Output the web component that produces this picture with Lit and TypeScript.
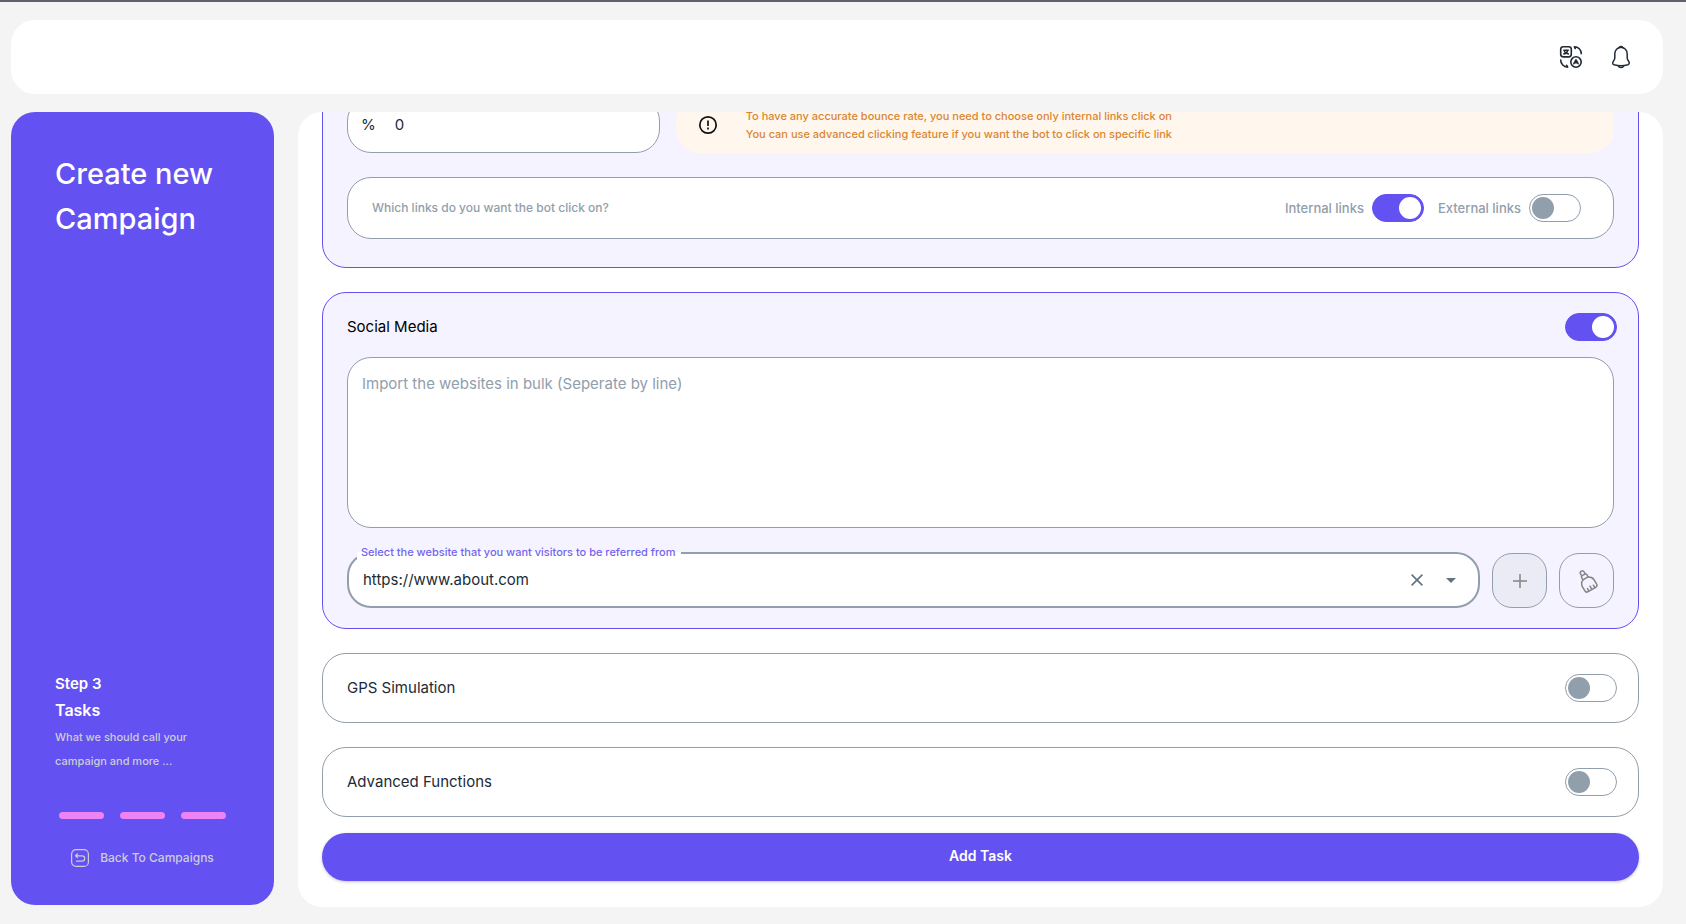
import { LitElement, html, css } from "lit";
import { customElement, property, state } from "lit/decorators.js";

@customElement("toggle-switch")
export class ToggleSwitch extends LitElement {
  @property({ type: Boolean }) checked = false;
  @property() label = "";
  @property({ type: Boolean, attribute: "show-label" }) showLabel = false;

  static styles = css`
    :host {
      display: block;
    }
    .wrap {
      display: flex;
      align-items: center;
      gap: 8px;
      cursor: pointer;
    }
    .caption {
      font-size: 13px;
      font-weight: 500;
      line-height: 20px;
      color: #919eab;
    }
    .box {
      appearance: none;
      box-sizing: border-box;
      display: flex;
      align-items: center;
      width: 52px;
      height: 28px;
      margin: 0;
      padding: 0 2px;
      border: 1px solid #919eab;
      border-radius: 14px;
      background: #fff;
      cursor: pointer;
    }
    .box::before {
      content: "";
      width: 22px;
      height: 22px;
      border-radius: 50%;
      background: #919eab;
    }
    .box:checked {
      justify-content: flex-end;
      border-color: #6351f2;
      background: #6351f2;
    }
    .box:checked::before {
      background: #fff;
    }
  `;

  render() {
    return html`<label class="wrap">
      ${this.showLabel ? html`<span class="caption">${this.label}</span>` : null}
      <input
        class="box"
        type="checkbox"
        role="switch"
        aria-label=${this.label}
        .checked=${this.checked}
        @change=${(e: Event) => (this.checked = (e.target as HTMLInputElement).checked)}
      />
    </label>`;
  }
}

@customElement("app-root")
export class AppRoot extends LitElement {
  @state() private website = "https://www.about.com";

  static styles = css`
    :host {
      display: grid;
      grid-template-rows: auto minmax(0, 1fr);
      gap: 18px;
      box-sizing: border-box;
      height: 100vh;
      padding: 18px 23px 17px 11px;
      border-top: 2px solid #625e6f;
      background: #f4f4f4;
      color: #212b36;
      font-family: Inter, "Open Sans", sans-serif;
      font-size: 15px;
      line-height: 24px;
    }
    * {
      box-sizing: border-box;
    }
    button,
    input,
    textarea {
      margin: 0;
      padding: 0;
      border: 0;
      background: none;
      color: inherit;
      font: inherit;
      outline: none;
    }
    button {
      cursor: pointer;
    }
    svg {
      display: block;
    }
    .header {
      display: flex;
      align-items: center;
      justify-content: flex-end;
      gap: 26px;
      height: 74px;
      padding: 0 30px;
      border-radius: 24px;
      background: #fff;
    }
    .body {
      display: grid;
      grid-template-columns: 263px minmax(0, 1fr);
      gap: 24px;
      min-height: 0;
    }
    .sidebar {
      display: flex;
      flex-direction: column;
      margin-bottom: 2px;
      padding: 39px 44px 35px;
      border-radius: 24px;
      background: #6351f2;
      color: #fff;
    }
    .title {
      margin: 0 0 auto;
      font-size: 29px;
      font-weight: 500;
      line-height: 45px;
    }
    .step,
    .task {
      margin: 0;
      font-size: 15px;
      font-weight: 600;
      line-height: 26px;
    }
    .task {
      font-size: 16px;
    }
    .hint {
      margin: 2px 0 0;
      font-size: 11px;
      font-weight: 500;
      line-height: 24px;
      color: #cdcdd6;
    }
    .progress {
      display: flex;
      gap: 16px;
      margin: 39px 4px 0;
    }
    .bar {
      width: 45px;
      height: 7px;
      border-radius: 4px;
      background: #ee82f7;
    }
    .back {
      display: flex;
      align-items: center;
      justify-content: center;
      gap: 11px;
      margin-top: 27px;
      color: #cdcdd6;
      font-size: 12px;
      font-weight: 500;
      line-height: 24px;
      text-decoration: none;
      white-space: nowrap;
    }
    /* A reversed column opens scrolled to its end. */
    .content {
      display: flex;
      flex-direction: column-reverse;
      overflow: auto;
      scrollbar-width: none;
      border-radius: 24px;
      background: #fff;
    }
    .form {
      flex: none;
      padding: 24px 24px 26px;
    }
    .stack {
      display: flex;
      flex-direction: column;
      gap: 24px;
    }
    .card {
      display: flex;
      flex-direction: column;
      gap: 24px;
      padding: 20px 24px;
      border: 1px solid #919eab;
      border-radius: 24px;
      background: #fff;
    }
    .active {
      border-color: #6351f2;
      background: #f5f3ff;
    }
    .bounce {
      padding: 24px 24px 28px;
    }
    .social .head {
      margin-bottom: -8px;
    }
    .head {
      display: flex;
      align-items: center;
      justify-content: space-between;
      margin-right: -3px;
    }
    .name {
      margin: 0;
      font-size: 15px;
      font-weight: 400;
      line-height: 24px;
    }
    .active .name {
      color: #000;
    }
    .row {
      display: grid;
      grid-template-columns: minmax(0, 1fr) minmax(0, 3fr);
      gap: 16px;
    }
    .percent {
      display: flex;
      align-items: center;
      gap: 19px;
      height: 56px;
      padding: 0 13px;
      border: 1px solid #919eab;
      border-radius: 24px;
      background: #fff;
    }
    .number {
      flex: 1;
      min-width: 0;
    }
    .notice {
      display: flex;
      align-items: center;
      gap: 28px;
      padding: 0 22px;
      border-radius: 24px;
      background: #fff7ed;
      color: #d98634;
      font-size: 11px;
      font-weight: 500;
      line-height: 18px;
    }
    .notice svg {
      flex: none;
    }
    .message {
      margin: 0;
    }
    .links {
      display: flex;
      align-items: center;
      gap: 14px;
      height: 62px;
      padding: 0 32px 0 24px;
      border: 1px solid #919eab;
      border-radius: 24px;
      background: #fff;
    }
    .question {
      flex: 1;
      margin: 0;
      font-size: 12px;
      font-weight: 500;
      line-height: 20px;
      color: #919eab;
    }
    .bulk {
      display: block;
      width: 100%;
      height: 171px;
      padding: 14px;
      border: 1px solid #919eab;
      border-radius: 24px;
      background: #fff;
      resize: none;
    }
    .bulk::placeholder {
      color: #919eab;
    }
    .picker {
      display: flex;
      align-items: flex-end;
      gap: 12px;
    }
    .select {
      position: relative;
      display: flex;
      flex: 1;
      align-items: center;
      gap: 10px;
      height: 56px;
      padding: 0 15px 0 14px;
      border: 2px solid #919eab;
      border-radius: 24px;
      background: #fff;
    }
    .float {
      position: absolute;
      top: -11px;
      left: 8px;
      padding: 0 6px 0 4px;
      background: linear-gradient(#f5f3ff 50%, #fff 50%);
      color: #7464f0;
      font-size: 11px;
      font-weight: 500;
      line-height: 18px;
    }
    .value {
      flex: 1;
      min-width: 0;
    }
    .mini {
      display: grid;
      place-items: center;
      width: 24px;
      height: 24px;
      color: #637381;
    }
    .square {
      display: grid;
      place-items: center;
      width: 55px;
      height: 55px;
      border: 1px solid #919eab;
      border-radius: 20px;
      color: #858585;
    }
    .shaded {
      background: #ebebf5;
    }
    .submit {
      display: block;
      width: 100%;
      height: 48px;
      margin-top: 16px;
      padding-bottom: 2px;
      border-radius: 24px;
      background: #6351f2;
      box-shadow: 0 1px 3px rgba(60, 60, 90, 0.3);
      color: #fff;
      font-size: 14px;
      font-weight: 600;
    }
  `;

  render() {
    return html`
      <header class="header">
        <button aria-label="Language">
          <svg width="24" height="24" viewBox="0 0 24 24" fill="none" stroke="#212b36" stroke-width="1.6" stroke-linecap="round" stroke-linejoin="round">
            <rect x="1.7" y="1.7" width="10.6" height="10.2" rx="2.6" />
            <path d="M4.900 5.300h4.400M4.900 8.900c2-.1 3.400-1.300 3.600-3.400M5.500 6.700c.8 1.300 2 2.100 3.800 2.200" />
            <circle cx="17" cy="17" r="5.2" />
            <path d="M14.900 18.700 17 14.900l2.100 3.800M15.800 17.700h2.400" />
            <path d="M1.7 15c0 4 3 7.100 7 7.100l-1-1.800M22.300 8.800c0-4-3-7.100-7-7.100l1 1.800" />
          </svg>
        </button>
        <button aria-label="Notifications">
          <svg width="24" height="24" viewBox="0 0 24 24" fill="none" stroke="#212b36" stroke-width="1.5" stroke-linecap="round">
            <path d="M12 2.300c-3.500 0-6.200 2.800-6.200 6.400v4.100c0 .6-.3 1.500-.6 2.100l-1.200 2c-.7 1.200-.2 2.500 1.100 2.900 4.500 1.200 9.300 1.200 13.800 0 1.200-.4 1.700-1.800 1.100-2.900l-1.200-2c-.3-.6-.6-1.500-.6-2.100V8.700c0-3.600-2.700-6.400-6.200-6.400Z" />
            <path d="M13.700 2.500a6.800 6.800 0 0 0-3.400 0c.3-.6.900-1 1.700-1s1.400.4 1.700 1ZM14.800 20.800c-.4 1-1.500 1.700-2.800 1.700s-2.400-.7-2.800-1.700" />
          </svg>
        </button>
      </header>
      <div class="body">
        <aside class="sidebar">
          <h1 class="title">Create new Campaign</h1>
          <p class="step">Step 3</p>
          <h2 class="task">Tasks</h2>
          <p class="hint">What we should call your campaign and more ...</p>
          <div class="progress">
            <span class="bar"></span><span class="bar"></span><span class="bar"></span>
          </div>
          <a class="back" href="#campaigns">
            <svg width="18" height="18" viewBox="0 0 18 18" fill="none" stroke="currentColor" stroke-width="1.2" stroke-linecap="round" stroke-linejoin="round">
              <rect x=".6" y=".6" width="16.800" height="16.800" rx="4.500" />
              <path d="M5.500 12.200h5.500a2.700 2.700 0 0 0 0-5.400H4.800M6.500 5 4.500 6.800l2 1.800" />
            </svg>
            Back To Campaigns
          </a>
        </aside>
        <main class="content">
          <div class="form">
            <div class="stack">
              <section class="card active bounce">
                <div class="row">
                  <label class="percent">
                    <span>%</span>
                    <input class="number" type="text" inputmode="numeric" value="0" />
                  </label>
                  <div class="notice">
                    <svg width="20" height="20" viewBox="0 0 20 20" fill="none" stroke="#111" stroke-width="1.700">
                      <circle cx="10" cy="10" r="8.200" />
                      <path d="M10 5.500v5.500M10 12.500v1.900" />
                    </svg>
                    <p class="message">
                      To have any accurate bounce rate, you need to choose only internal links click on<br />
                      You can use advanced clicking feature if you want the bot to click on specific link
                    </p>
                  </div>
                </div>
                <div class="links">
                  <p class="question">Which links do you want the bot click on?</p>
                  <toggle-switch show-label checked label="Internal links"></toggle-switch>
                  <toggle-switch show-label label="External links"></toggle-switch>
                </div>
              </section>

              <section class="card active social">
                <div class="head">
                  <h3 class="name">Social Media</h3>
                  <toggle-switch checked label="Social Media"></toggle-switch>
                </div>
                <textarea
                  class="bulk"
                  aria-label="Websites"
                  placeholder="Import the websites in bulk (Seperate by line)"
                ></textarea>
                <div class="picker">
                  <div class="select">
                    <label class="float" for="website">Select the website that you want visitors to be referred from</label>
                    <input
                      class="value"
                      id="website"
                      role="combobox"
                      aria-expanded="false"
                      .value=${this.website}
                      @input=${(e: Event) => (this.website = (e.target as HTMLInputElement).value)}
                    />
                    <button class="mini" aria-label="Clear" @click=${() => (this.website = "")}>
                      <svg width="12" height="12" viewBox="0 0 12 12" fill="none" stroke="currentColor" stroke-width="1.600">
                        <path d="m.6.6 10.800 10.800M11.400.6.6 11.400" />
                      </svg>
                    </button>
                    <button class="mini" aria-label="Open">
                      <svg width="10" height="5" viewBox="0 0 10 5" fill="currentColor"><path d="m0 0 5 5 5-5z" /></svg>
                    </button>
                  </div>
                  <button class="square shaded" aria-label="Add">
                    <svg width="14" height="14" viewBox="0 0 14 14" fill="none" stroke="currentColor" stroke-width="1.500">
                      <path d="M7 0v14M0 7h14" />
                    </svg>
                  </button>
                  <button class="square" aria-label="Clean">
                    <svg width="24" height="24" viewBox="0 0 24 24" fill="none" stroke="currentColor" stroke-width="1.500" stroke-linecap="round" stroke-linejoin="round">
                      <g transform="rotate(-30 12 12)">
                        <path d="M10 5V2.600a2 2 0 0 1 4 0V5M9 9V6.500A1.500 1.500 0 0 1 10.500 5h3A1.500 1.500 0 0 1 15 6.500V9" />
                        <path d="M9 9h6c2 1 3.800 3 3.800 5.500v4.700c0 1.600-.9 2.600-2.400 2.600H7.600c-1.500 0-2.400-1-2.400-2.600v-4.700C5.200 12 7 10 9 9Z" />
                        <path d="M8.600 21.500v-2.700M12 21.500v-3.500M15.400 21.500v-2.700" />
                      </g>
                    </svg>
                  </button>
                </div>
              </section>

              <section class="card">
                <div class="head">
                  <h3 class="name">GPS Simulation</h3>
                  <toggle-switch label="GPS Simulation"></toggle-switch>
                </div>
              </section>

              <section class="card">
                <div class="head">
                  <h3 class="name">Advanced Functions</h3>
                  <toggle-switch label="Advanced Functions"></toggle-switch>
                </div>
              </section>
            </div>
            <button class="submit">Add Task</button>
          </div>
        </main>
      </div>
    `;
  }
}
